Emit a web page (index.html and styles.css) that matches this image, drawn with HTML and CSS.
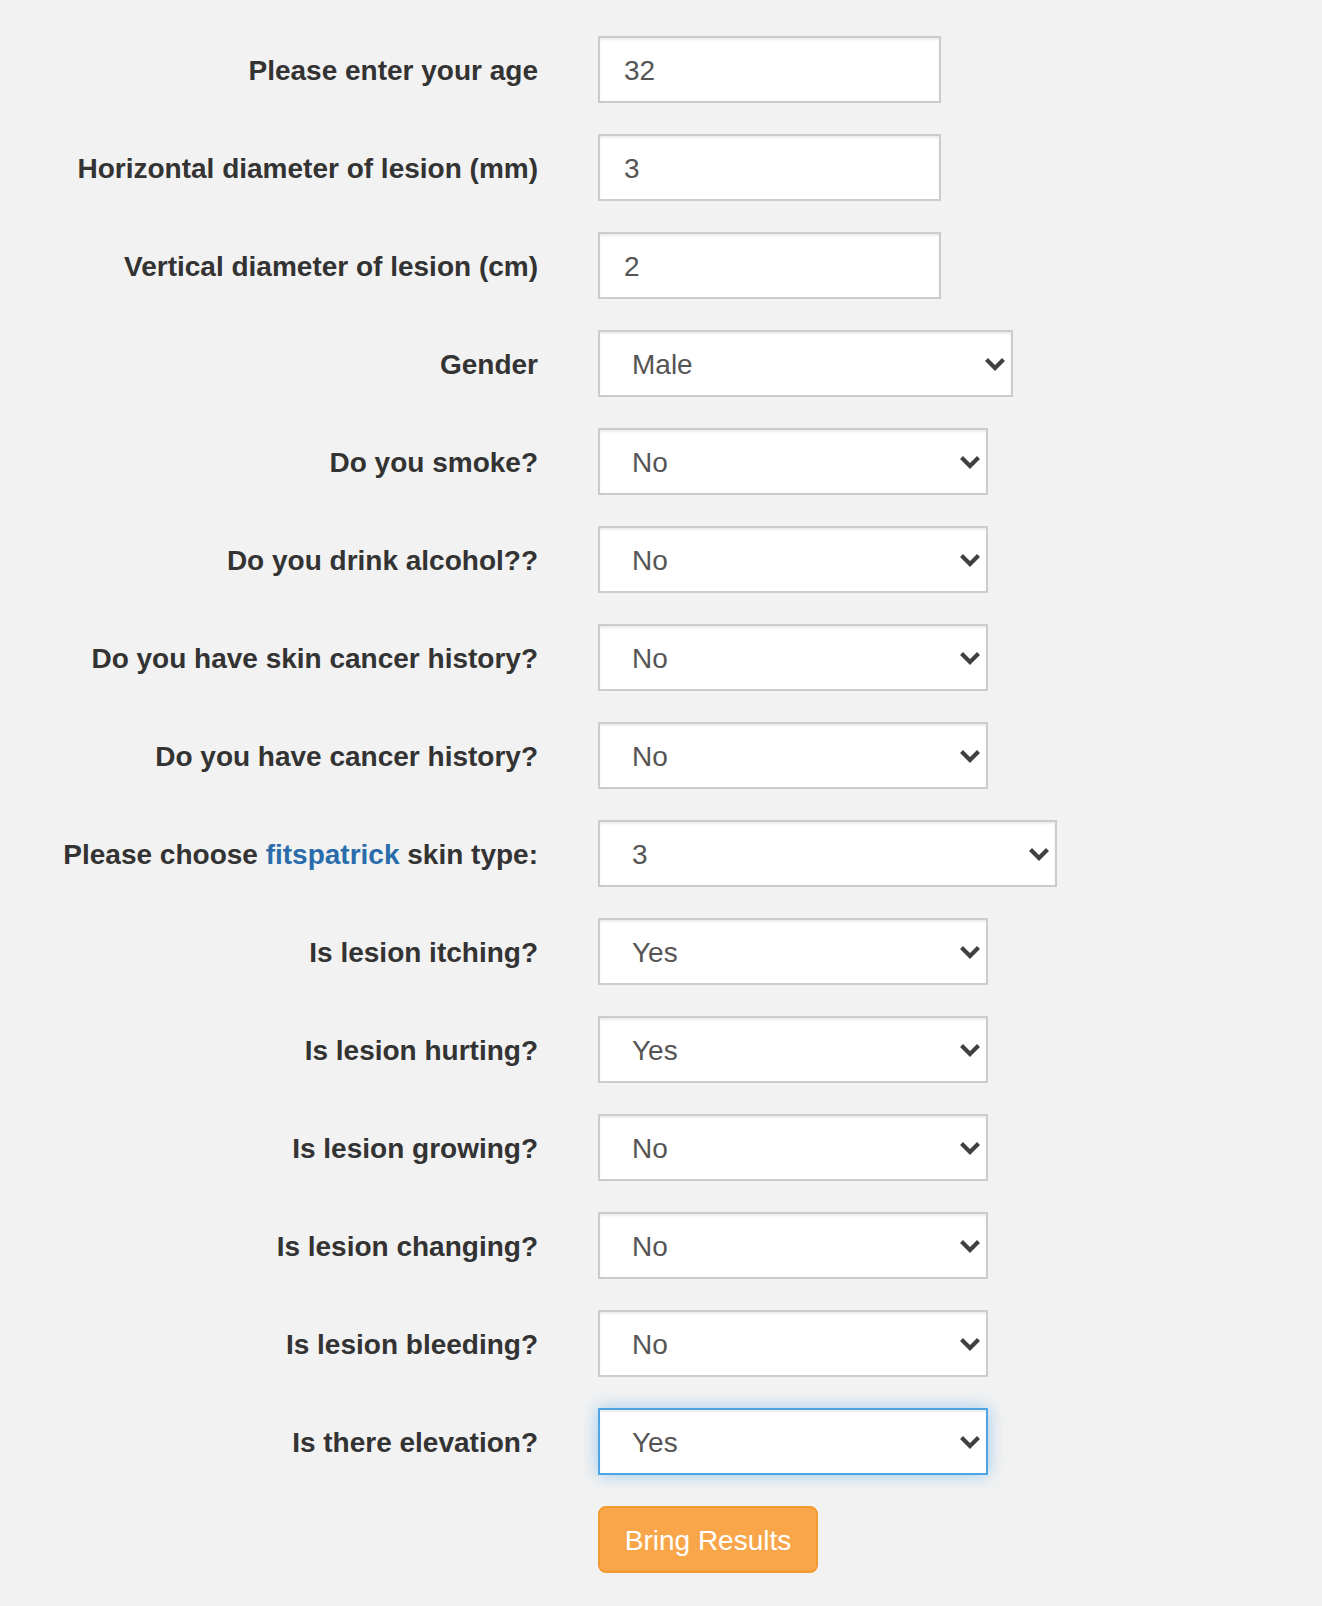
FILE: index.html
```html
<!DOCTYPE html>
<html lang="en">
<head>
<meta charset="utf-8">
<title>Lesion form</title>
<link rel="stylesheet" href="styles.css">
</head>
<body>
<form class="form">
  <div class="row">
    <label class="label">Please enter your age</label>
    <div class="field"><input class="control w-input" type="text" value="32"></div>
  </div>
  <div class="row">
    <label class="label">Horizontal diameter of lesion (mm)</label>
    <div class="field"><input class="control w-input" type="text" value="3"></div>
  </div>
  <div class="row">
    <label class="label">Vertical diameter of lesion (cm)</label>
    <div class="field"><input class="control w-input" type="text" value="2"></div>
  </div>
  <div class="row">
    <label class="label">Gender</label>
    <div class="field"><div class="select-wrap w-gender"><select class="control select"><option>Male</option><option>Female</option></select><svg class="chev" viewBox="0 0 20 13" width="20" height="13"><path d="M3 3 L10 10 L17 3"/></svg></div></div>
  </div>
  <div class="row">
    <label class="label">Do you smoke?</label>
    <div class="field"><div class="select-wrap w-yn"><select class="control select"><option>No</option><option>Yes</option></select><svg class="chev" viewBox="0 0 20 13" width="20" height="13"><path d="M3 3 L10 10 L17 3"/></svg></div></div>
  </div>
  <div class="row">
    <label class="label">Do you drink alcohol??</label>
    <div class="field"><div class="select-wrap w-yn"><select class="control select"><option>No</option><option>Yes</option></select><svg class="chev" viewBox="0 0 20 13" width="20" height="13"><path d="M3 3 L10 10 L17 3"/></svg></div></div>
  </div>
  <div class="row">
    <label class="label">Do you have skin cancer history?</label>
    <div class="field"><div class="select-wrap w-yn"><select class="control select"><option>No</option><option>Yes</option></select><svg class="chev" viewBox="0 0 20 13" width="20" height="13"><path d="M3 3 L10 10 L17 3"/></svg></div></div>
  </div>
  <div class="row">
    <label class="label">Do you have cancer history?</label>
    <div class="field"><div class="select-wrap w-yn"><select class="control select"><option>No</option><option>Yes</option></select><svg class="chev" viewBox="0 0 20 13" width="20" height="13"><path d="M3 3 L10 10 L17 3"/></svg></div></div>
  </div>
  <div class="row">
    <label class="label">Please choose <a class="link" href="#">fitspatrick</a> skin type:</label>
    <div class="field"><div class="select-wrap w-skin"><select class="control select"><option>1</option><option>2</option><option selected>3</option><option>4</option><option>5</option><option>6</option></select><svg class="chev" viewBox="0 0 20 13" width="20" height="13"><path d="M3 3 L10 10 L17 3"/></svg></div></div>
  </div>
  <div class="row">
    <label class="label">Is lesion itching?</label>
    <div class="field"><div class="select-wrap w-yn"><select class="control select"><option>Yes</option><option>No</option></select><svg class="chev" viewBox="0 0 20 13" width="20" height="13"><path d="M3 3 L10 10 L17 3"/></svg></div></div>
  </div>
  <div class="row">
    <label class="label">Is lesion hurting?</label>
    <div class="field"><div class="select-wrap w-yn"><select class="control select"><option>Yes</option><option>No</option></select><svg class="chev" viewBox="0 0 20 13" width="20" height="13"><path d="M3 3 L10 10 L17 3"/></svg></div></div>
  </div>
  <div class="row">
    <label class="label">Is lesion growing?</label>
    <div class="field"><div class="select-wrap w-yn"><select class="control select"><option>No</option><option>Yes</option></select><svg class="chev" viewBox="0 0 20 13" width="20" height="13"><path d="M3 3 L10 10 L17 3"/></svg></div></div>
  </div>
  <div class="row">
    <label class="label">Is lesion changing?</label>
    <div class="field"><div class="select-wrap w-yn"><select class="control select"><option>No</option><option>Yes</option></select><svg class="chev" viewBox="0 0 20 13" width="20" height="13"><path d="M3 3 L10 10 L17 3"/></svg></div></div>
  </div>
  <div class="row">
    <label class="label">Is lesion bleeding?</label>
    <div class="field"><div class="select-wrap w-yn"><select class="control select"><option>No</option><option>Yes</option></select><svg class="chev" viewBox="0 0 20 13" width="20" height="13"><path d="M3 3 L10 10 L17 3"/></svg></div></div>
  </div>
  <div class="row">
    <label class="label">Is there elevation?</label>
    <div class="field"><div class="select-wrap w-yn"><select class="control select focused"><option>Yes</option><option>No</option></select><svg class="chev" viewBox="0 0 20 13" width="20" height="13"><path d="M3 3 L10 10 L17 3"/></svg></div></div>
  </div>
  <div class="row">
    <span class="label"></span>
    <div class="field"><button class="btn" type="button">Bring Results</button></div>
  </div>
</form>
</body>
</html>
```

FILE: styles.css
```css
html, body {
  margin: 0;
  padding: 0;
  background: #f2f2f2;
}

body {
  font-family: "Liberation Sans", Arial, Helvetica, sans-serif;
  color: #333;
}

.form {
  display: flex;
  flex-direction: column;
  gap: 31px;
  padding-top: 36px;
  padding-bottom: 33px;
}

.row {
  display: grid;
  grid-template-columns: 538px 1fr;
  column-gap: 60px;
  align-items: center;
}

.label {
  text-align: right;
  font-size: 28px;
  font-weight: bold;
  line-height: 40px;
  padding-top: 2px;
  color: #333;
}

.link {
  color: #2a6cab;
  text-decoration: none;
}

.field {
  display: flex;
}

.control {
  box-sizing: border-box;
  height: 67px;
  margin: 0;
  border: 2px solid #cccccc;
  border-radius: 0;
  background: #fff;
  box-shadow: inset 0 2px 2px rgba(0, 0, 0, 0.075);
  font-family: "Liberation Sans", Arial, Helvetica, sans-serif;
  font-size: 28px;
  color: #555;
  padding: 2px 24px 0;
  outline: none;
}

.w-input {
  width: 343px;
}

.select-wrap {
  position: relative;
  display: flex;
}

.w-gender { width: 415px; }
.w-yn { width: 390px; }
.w-skin { width: 459px; }

.select {
  width: 100%;
  -webkit-appearance: none;
  appearance: none;
  padding-left: 32px;
  padding-right: 40px;
}

.select.focused {
  border-color: #4fa5e4;
  box-shadow: inset 0 2px 2px rgba(0, 0, 0, 0.075), 0 0 16px rgba(102, 175, 233, 0.6);
}

.chev {
  position: absolute;
  right: 8px;
  top: 50%;
  margin-top: -6px;
  pointer-events: none;
}

.chev path {
  fill: none;
  stroke: #404040;
  stroke-width: 4.2;
  stroke-linecap: square;
  stroke-linejoin: miter;
}

.btn {
  box-sizing: border-box;
  width: 220px;
  height: 67px;
  margin: 0;
  padding: 2px 24px 0;
  border: 2px solid #f49a32;
  border-radius: 8px;
  background: #f9a64a;
  color: #fff;
  font-family: "Liberation Sans", Arial, Helvetica, sans-serif;
  font-size: 28px;
  font-weight: normal;
  cursor: pointer;
}
```
